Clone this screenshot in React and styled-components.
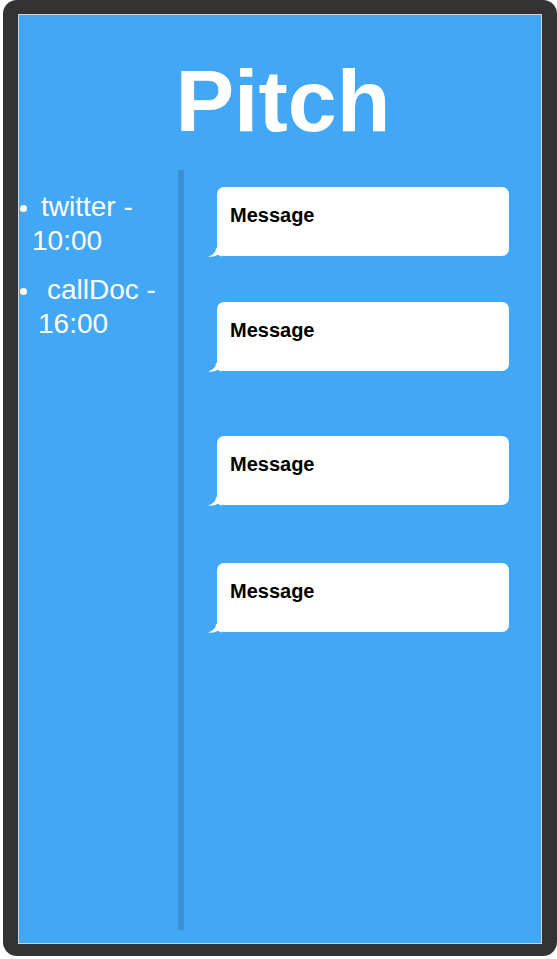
import React from 'react';
import styled, { createGlobalStyle } from 'styled-components';

const GlobalStyle = createGlobalStyle`
  html, body { margin: 0; padding: 0; background: #fff; }
  body { font-family: "Liberation Sans", Arial, Helvetica, sans-serif; }
`;

const schedule = [
  { name: 'twitter', time: '10:00', indent: 5 },
  { name: 'callDoc', time: '16:00', indent: 11 },
];

const messages = [
  { id: 1, gap: 17 },
  { id: 2, gap: 46 },
  { id: 3, gap: 65 },
  { id: 4, gap: 58 },
];

export default function App() {
  return (
    <>
      <GlobalStyle />
      <Phone>
        <Screen>
          <Title>Pitch</Title>
          <Body>
            <Sidebar>
              <List>
                {schedule.map(item => (
                  <Item key={item.name}>
                    <Dot />
                    <ItemText indent={item.indent}>{item.name} - {item.time}</ItemText>
                  </Item>
                ))}
              </List>
            </Sidebar>
            <Divider />
            <Feed>
              {messages.map(m => (
                <Bubble key={m.id} gap={m.gap}>
                  Message
                  <Tail viewBox="0 0 14 9" width="14" height="9">
                    <path d="M8 0 Q8 6 0 8.6 Q6 9.2 10 6.8 Q12 8.4 14 8.4 L14 0 Z" fill="#fff" />
                  </Tail>
                </Bubble>
              ))}
            </Feed>
          </Body>
        </Screen>
      </Phone>
    </>
  );
}

const Phone = styled.div`
  margin-left: 3px; width: 554px; height: 956px; box-sizing: border-box;
  background: #333; border-radius: 14px;
  padding: 14px 15px 12px 15px;
`
const Screen = styled.div`
  height: 930px; box-sizing: border-box;
  background: #42a7f5; border: 1px solid #d4d4d4;
  display: flex; flex-direction: column;
`
const Title = styled.h1`
  margin: 42px 0 25px; padding-left: 6px;
  font-size: 88px; line-height: 88px; font-weight: bold;
  color: #fff; text-align: center;
`
const Body = styled.div`
  display: flex; height: 760px;
`
const Sidebar = styled.div`
  width: 159px;
`
const List = styled.ul`
  margin: 20px 0 0; padding: 0; list-style: none;
`
const Item = styled.li`
  display: flex; align-items: flex-start;
  margin-bottom: 15px;
`
const Dot = styled.span`
  flex: none; width: 7px; height: 7px; border-radius: 50%;
  background: #fff; margin: 15px 0 0 1px;
`
const ItemText = styled.span`
  margin-left: ${p => p.indent}px;
  text-indent: 9px;
  color: #fff; font-size: 28px; line-height: 34px;
`
const Divider = styled.div`
  width: 6px; background: #3a90d4; flex: none;
`
const Feed = styled.div`
  display: flex; flex-direction: column;
  padding-left: 33px;
`
const Bubble = styled.div`
  position: relative;
  width: 292px; height: 69px; box-sizing: border-box;
  margin-top: ${p => p.gap}px;
  padding: 17px 13px;
  background: #fff; border-radius: 7px;
  color: #000; font-size: 20px; font-weight: bold; line-height: 23px;
`
const Tail = styled.svg`
  position: absolute; left: -9px; bottom: -1px;
`
